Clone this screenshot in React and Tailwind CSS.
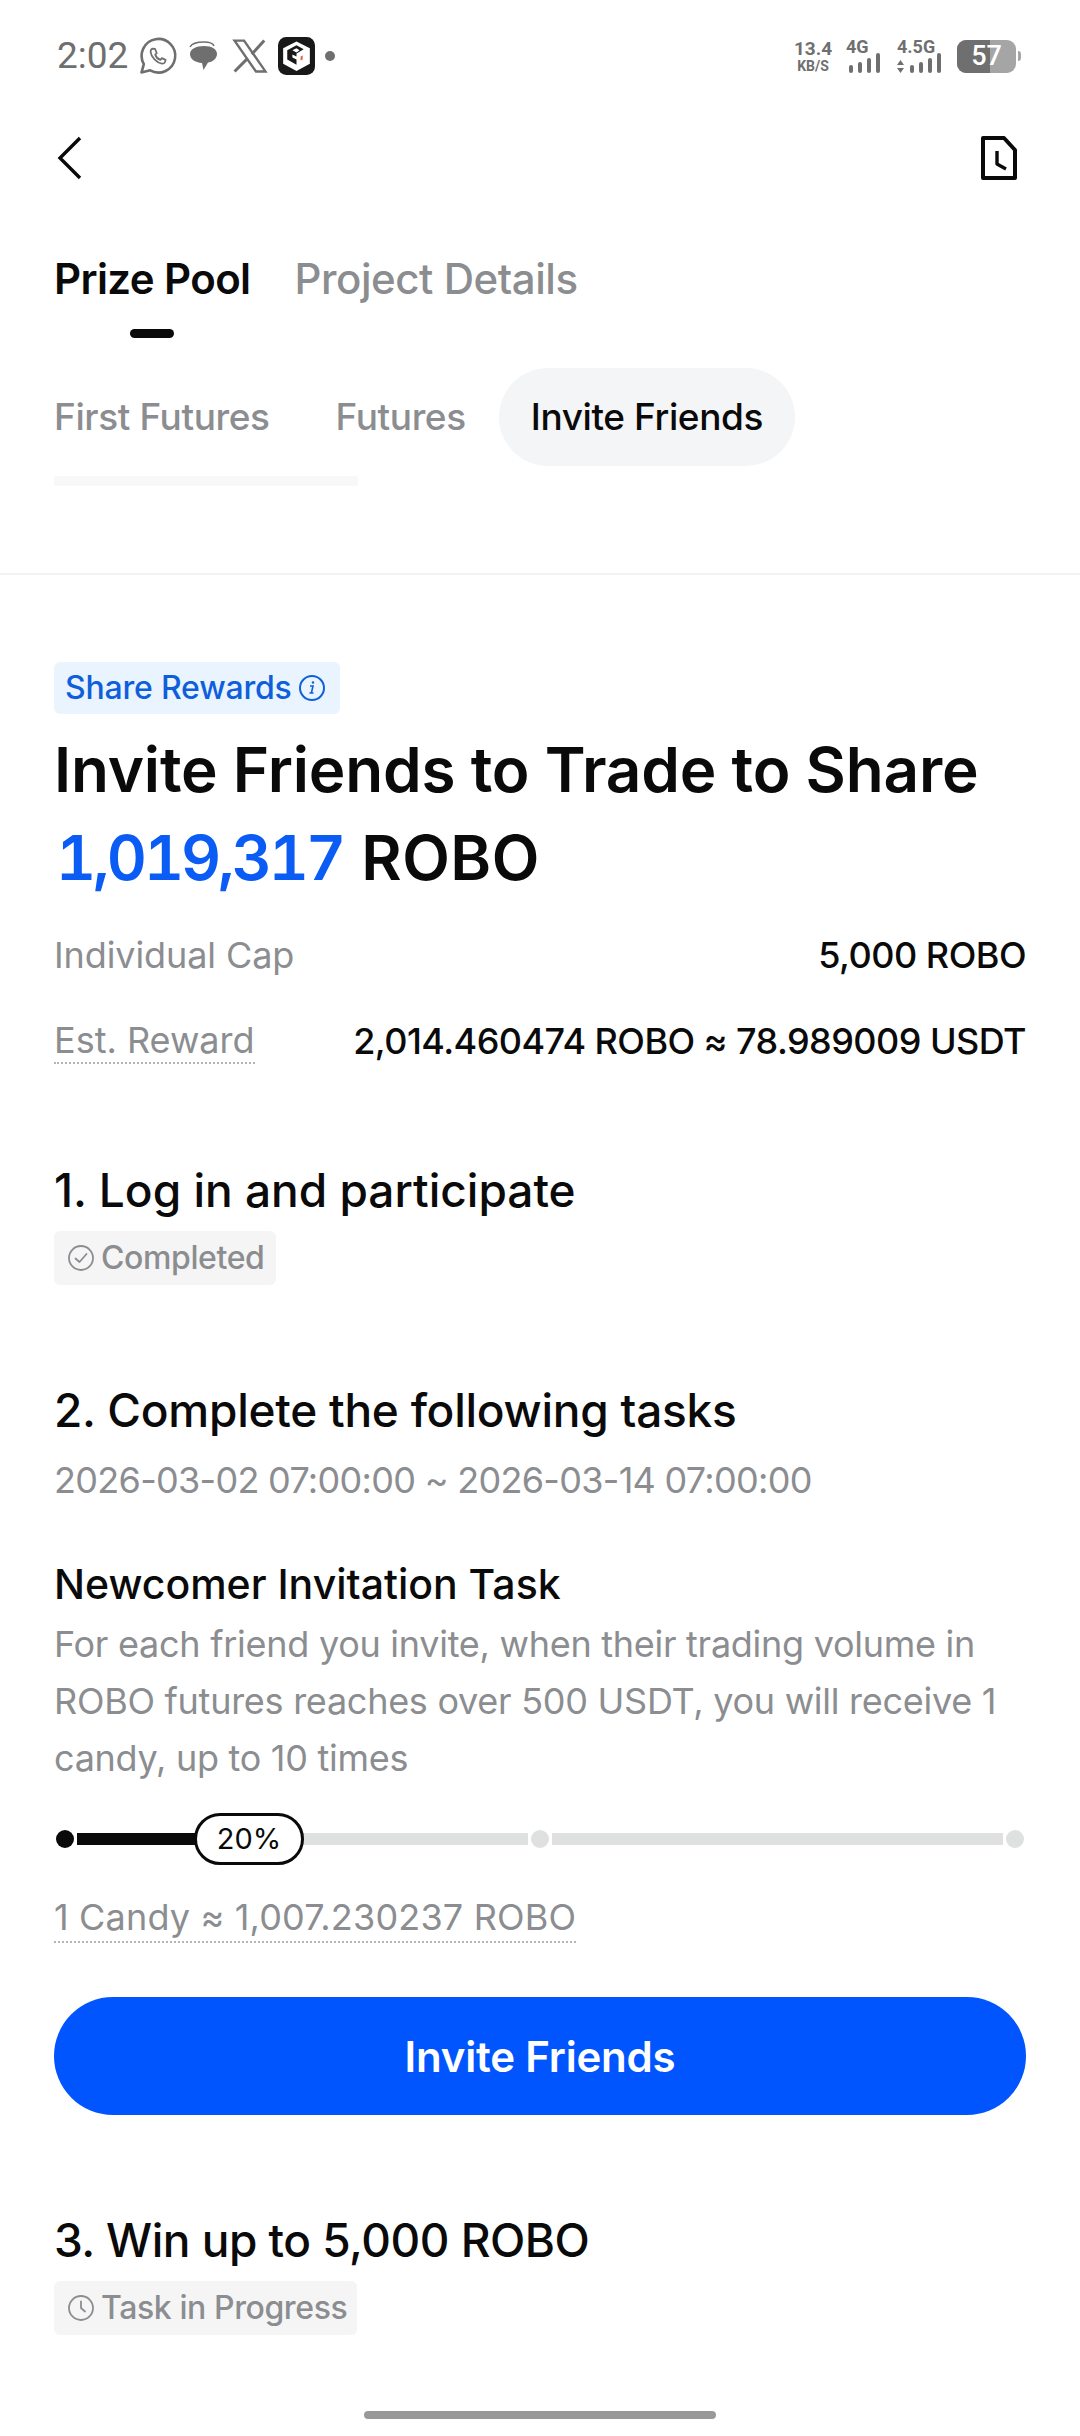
const Wa = () => (
  <svg width="42" height="42" viewBox="0 0 24 24" fill="none" stroke="#6f6f6f" strokeWidth="1.500" strokeLinecap="round" strokeLinejoin="round" className="shrink-0">
    <path d="M2.600 21.400l1.300-4.800A9.600 9.600 0 1 1 7.500 20.200L2.600 21.400z" />
    <path d="M9 7.800c-.6.1-1.300.9-1.200 2 .2 2.600 3.500 6.200 6.400 6.500 1 .1 1.900-.6 2-1.300l.1-.8-2.100-1-.8 1c-1.200-.4-2.600-1.800-3-3l.9-.8-1-2.500z" strokeWidth="1" />
  </svg>
);
const Msg = () => (
  <svg width="32" height="32" viewBox="0 0 32 32" fill="none" className="shrink-0">
    <path d="M2 7C4 3 10 2 16 2s9 1 10 4" stroke="#6f6f6f" strokeWidth="1.500" />
    <path d="M2 14c0-5 6-8 14-8s13 3 13 8-5 8-9 8.500L15.500 30 14 23C7 22.500 2 19 2 14z" fill="#6f6f6f" />
  </svg>
);
const XIcon = () => (
  <svg width="38" height="38" viewBox="0 0 32 32" fill="none" stroke="#6f6f6f" strokeWidth="2" className="shrink-0">
    <path d="M3 3h8l18 26h-8z" />
    <path d="M28 3 17.500 14.500M14 18 3 29" strokeWidth="2.500" />
  </svg>
);
const AppLogo = () => (
  <svg width="37" height="38" viewBox="0 0 36 37" className="shrink-0">
    <rect width="36" height="37" rx="8" fill="#181818" />
    <path d="M18 4.500 31 11v15l-13 7-13-7V11z" fill="#fff" />
    <path d="M9 13 18 8l7 4-7 4v3l-4-2v3l4 2v5l-9-5zM14 13l4 2 3-2-3-2z" fill="#181818" />
    <path d="M22 19l2-1v4l-2 1z" fill="#e0603a" />
  </svg>
);
const Bars = () => (
  <div className="flex items-end gap-[5px] h-[20px]">
    <span className="w-[4px] h-[8px] rounded-full bg-[#6f6f6f]" />
    <span className="w-[4px] h-[11px] rounded-full bg-[#6f6f6f]" />
    <span className="w-[4px] h-[15px] rounded-full bg-[#6f6f6f]" />
    <span className="w-[4px] h-[20px] rounded-full bg-[#6f6f6f]" />
  </div>
);
const StatusBar = () => (
  <div className="h-[112px] pl-[57px] pr-[59px] flex items-center justify-between">
    <div className="flex items-center">
      <span className="text-[37px] text-[#6f6f6f] font-['Roboto',sans-serif] w-[80px]">2:02</span>
      <Wa />
      <span className="ml-[9px] flex"><Msg /></span>
      <span className="ml-[11px] flex"><XIcon /></span>
      <span className="ml-[9px] flex"><AppLogo /></span>
      <span className="ml-[10px] w-[10px] h-[10px] rounded-full bg-[#6f6f6f]" />
    </div>
    <div className="flex items-center text-[#6f6f6f] font-['Roboto',sans-serif] font-bold">
      <div className="flex flex-col items-center leading-none w-[36px]">
        <span className="text-[19px]">13.4</span>
        <span className="text-[14px] mt-[1px]">KB/S</span>
      </div>
      <div className="flex flex-col ml-[15px] w-[34px]">
        <span className="text-[18px] leading-[13px]">4G</span>
        <div className="flex justify-end"><Bars /></div>
      </div>
      <div className="flex flex-col ml-[17px] w-[44px]">
        <span className="text-[18px] leading-[13px]">4.5G</span>
        <div className="flex justify-between items-end">
          <svg width="7" height="13" viewBox="0 0 7 13">
            <path d="M3.500 0 7 5H0zM3.500 13 0 8h7z" fill="#6f6f6f" />
          </svg>
          <Bars />
        </div>
      </div>
      <div className="ml-[16px] flex items-center">
        <div className="relative w-[59px] h-[33px] rounded-[9px] overflow-hidden bg-[#a5a5a5] flex">
          <div className="w-[33px] h-full bg-[#6f6f6f]" />
          <span className="absolute inset-0 flex items-center justify-center text-[27px] text-white font-medium font-['Roboto',sans-serif]">57</span>
        </div>
        <div className="ml-[2px] w-[3px] h-[10px] rounded-r bg-[#a5a5a5]" />
      </div>
    </div>
  </div>
);
const Info = () => (
  <svg width="28" height="28" viewBox="0 0 28 28" fill="none" stroke="#0f5fdc" strokeWidth="2">
    <circle cx="14" cy="14" r="12" />
    <path d="M12 12h3l-1.500 6.500M11.500 19h4" strokeWidth="1.600" />
    <circle cx="15" cy="8.500" r="1.200" fill="#0f5fdc" stroke="none" />
  </svg>
);
const Check = () => (
  <svg width="28" height="28" viewBox="0 0 28 28" fill="none" stroke="#8b8d90" strokeWidth="1.800" className="shrink-0">
    <circle cx="14" cy="14" r="12" />
    <path d="m8.500 14.500 4 3.500 7-8" strokeLinecap="round" strokeLinejoin="round" />
  </svg>
);
const Clock = () => (
  <svg width="28" height="28" viewBox="0 0 28 28" fill="none" stroke="#8b8d90" strokeWidth="1.800" className="shrink-0">
    <circle cx="14" cy="14" r="12" />
    <path d="M14 7.500V14l4 3.500" strokeLinecap="round" strokeLinejoin="round" />
  </svg>
);
const Dot = ({ c }) => <span className={`w-[18px] h-[18px] rounded-full shrink-0 ${c}`} />;
const Tag = ({ icon, children, mt, w }) => (
  <div className={`h-[54px] rounded-[6px] bg-[#f5f5f6] flex items-center gap-[6px] pl-[13px] text-[32px] tracking-[-0.4px] text-[#8b8d90] font-medium whitespace-nowrap ${mt} ${w}`}>
    {icon}
    <span>{children}</span>
  </div>
);

export default function App() {
  return (
    <div className="w-[1080px] h-[2436px] bg-white overflow-hidden font-['Inter',sans-serif] text-[#0a0a0a] relative">
      <StatusBar />
      <div className="h-[92px] px-[54px] flex items-center justify-between">
        <svg width="26" height="44" viewBox="0 0 26 44" fill="none" stroke="#0a0a0a" strokeWidth="3.400" className="ml-[3px]">
          <path d="M23 2 3 22l20 20" />
        </svg>
        <svg width="36" height="44" viewBox="0 0 36 44" fill="none" stroke="#0a0a0a" strokeWidth="4" strokeLinejoin="round" className="mr-[9px]">
          <path d="M2 2h21l11 12v28H2z" />
          <path d="M16 15v13l9 5" strokeWidth="3.400" />
        </svg>
      </div>
      <div className="mt-[44px] pl-[54px] flex items-center gap-[44px] h-[60px] text-[42px] tracking-[-0.45px]">
        <span className="font-semibold tracking-[-0.6px]">Prize Pool</span>
        <span className="font-medium text-[#8b8d90]">Project Details</span>
      </div>
      <div className="ml-[130px] mt-[21px] w-[44px] h-[9px] rounded-full bg-[#0a0a0a]" />
      <div className="mt-[30px] pl-[54px] flex items-center h-[98px] text-[37px] tracking-[-0.4px] font-medium">
        <span className="text-[#8b8d90]">First Futures</span>
        <span className="text-[#8b8d90] ml-[66px]">Futures</span>
        <span className="ml-[33px] h-[98px] px-[32px] rounded-full bg-[#f4f5f6] flex items-center">Invite Friends</span>
      </div>
      <div className="ml-[54px] mt-[10px] w-[304px] h-[10px] rounded-[2px] bg-[#f8f8f8]" />
      <div className="mt-[87px] h-[2px] bg-[#f2f2f3]" />

      <div className="px-[54px]">
        <div className="mt-[87px] w-[286px] h-[52px] rounded-[6px] bg-[#e9f4fe] flex items-center gap-[6px] pl-[11px] text-[32px] tracking-[-0.2px] text-[#0f5fdc] font-medium">
          <span>Share Rewards</span>
          <Info />
        </div>
        <h1 className="mt-[12px] text-[62px] leading-[88px] font-semibold tracking-[-0.2px] whitespace-nowrap">
          Invite Friends to Trade to Share
          <br />
          <span className="text-[#0a5cf5] tabular-nums tracking-[-3px] ml-[2px]">1,019,317</span>
          <span className="tracking-[0.5px] ml-[2px]"> ROBO</span>
        </h1>
        <div className="mt-[26px] flex items-center justify-between text-[36px] leading-[54px]">
          <span className="text-[#8b8d90] tracking-[-0.1px]">Individual Cap</span>
          <span className="font-medium tracking-[-0.5px]">5,000 ROBO</span>
        </div>
        <div className="mt-[32px] flex items-center justify-between text-[36px] leading-[54px]">
          <span className="text-[#8b8d90] border-b-2 border-dotted border-[#b5b5b5] leading-[44px]">Est. Reward</span>
          <span className="font-medium tracking-[-0.55px]">2,014.460474 ROBO ≈ 78.989009 USDT</span>
        </div>

        <div className="mt-[92px] text-[46px] leading-[60px] font-medium">1. Log in and participate</div>
        <Tag icon={<Check />} mt="mt-[11px]" w="w-[222px]">Completed</Tag>

        <div className="mt-[95px] text-[46px] leading-[60px] font-medium tracking-[-0.25px]">2. Complete the following tasks</div>
        <div className="mt-[13px] text-[36px] leading-[54px] text-[#8b8d90] tracking-[-0.7px]">2026-03-02 07:00:00 ~ 2026-03-14 07:00:00</div>
        <div className="mt-[51px] text-[41px] leading-[52px] font-medium">Newcomer Invitation Task</div>
        <p className="mt-[6px] text-[36px] leading-[57px] text-[#8b8d90] tracking-[-0.27px]">
          For each friend you invite, when their trading volume in ROBO futures reaches over 500 USDT, you will receive 1 candy, up to 10 times
        </p>

        <div className="mt-[26px] h-[52px] px-[2px] flex items-center gap-[3px] relative">
          <Dot c="bg-[#0a0a0a]" />
          <span className="flex-1 h-[12px] bg-[#dfe1e1]">
            <span className="block w-[120px] h-full bg-[#0a0a0a]" />
          </span>
          <Dot c="bg-[#dfe1e1]" />
          <span className="flex-1 h-[12px] bg-[#dfe1e1]" />
          <Dot c="bg-[#dfe1e1]" />
          <span className="absolute left-[140px] top-0 w-[110px] h-[52px] rounded-full bg-white border-[3px] border-[#0a0a0a] flex items-center justify-center text-[29px]">20%</span>
        </div>
        <div className="mt-[28px] w-fit text-[36px] leading-[48px] text-[#8b8d90] tracking-[0.17px] border-b-2 border-dotted border-[#b5b5b5]">1 Candy ≈ 1,007.230237 ROBO</div>
        <button className="mt-[54px] w-full h-[118px] rounded-full bg-[#0055ff] text-white text-[42px] tracking-[-0.2px] font-semibold flex items-center justify-center">Invite Friends</button>

        <div className="mt-[95px] text-[46px] leading-[60px] font-medium tracking-[-0.5px]">3. Win up to 5,000 ROBO</div>
        <Tag icon={<Clock />} mt="mt-[11px]" w="w-[303px]">Task in Progress</Tag>
      </div>
      <div className="absolute left-[364px] top-[2411px] w-[352px] h-[8px] rounded-full bg-[#999999]" />
    </div>
  );
}
